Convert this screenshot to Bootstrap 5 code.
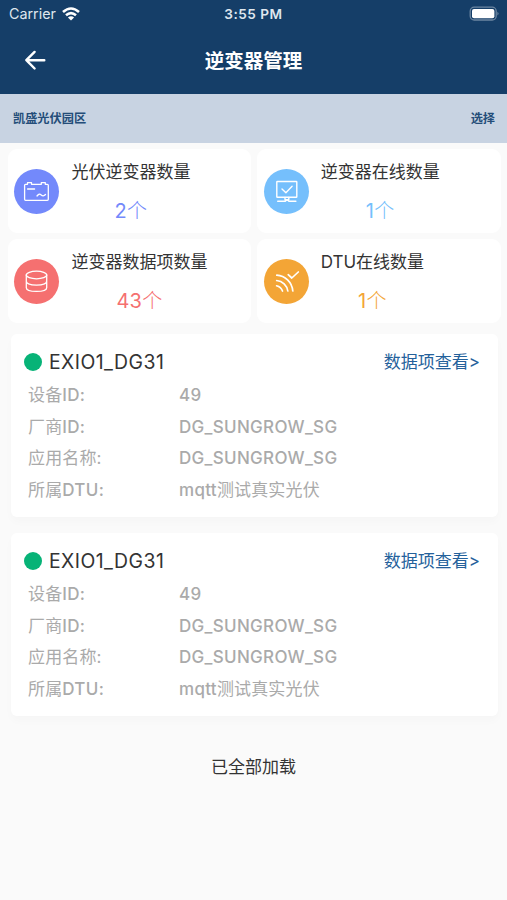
<!DOCTYPE html>
<html lang="zh-CN">
<head>
<meta charset="utf-8">
<meta name="viewport" content="width=device-width, initial-scale=1">
<title>逆变器管理</title>
<link href="https://cdn.jsdelivr.net/npm/bootstrap@5.3.0/dist/css/bootstrap.min.css" rel="stylesheet">
<style>
body{background:#fafafa;color:#333;font-family:Inter,"Noto Sans CJK SC",sans-serif;font-size:17px;line-height:24px;min-height:900px;overflow-x:hidden}
svg{display:block;fill:none;stroke-linecap:round;stroke-linejoin:round}
.app-head{background:#153e68;height:94px}
.status-line{height:28px;padding:0 7px 0 9px;font-size:14.3px;color:#dfe6ee}
.status-line .clock{font-size:13.6px;font-weight:600;letter-spacing:.5px}
.wifi{margin-left:6px}
.title-line{height:65px}
.title-line h1{font-size:19.5px;font-weight:700;line-height:28px}
.back{width:71px}
.site-strip{background:#c8d3e2;height:48.5px;padding:2px 12px 0 13px;font-size:12.2px;font-weight:700;color:#244d79}
.stats{padding:6.5px 6.5px 0 8px;gap:6px;display:grid;grid-template-columns:1fr 1fr}
.stat{border:0;border-radius:9px;height:84.2px;padding:0 0 0 6.4px;background:#fff}
.disc{width:45px;height:45px}
.stat-copy{margin-left:12px;padding-top:11px}
.stat-num{font-size:20px;line-height:28px;margin-top:12.5px;font-weight:400;letter-spacing:.2px}
.unit{font-weight:300}
.c-violet{background:#7389fb}.c-sky{background:#75bffc}.c-coral{background:#f57070}.c-amber{background:#f3a536}
.t-violet{color:#7389fb}.t-sky{color:#75bffc}.t-coral{color:#f57070}.t-amber{color:#f3a536}
.devices{padding:10.5px 9px 0 11px;gap:16px}
.device{border:0;border-radius:6px;height:183px;background:#fff;padding:15px 18px 0 13px;box-shadow:0 5px 9px rgba(0,0,0,.018)}
.live{width:18px;height:18px;background:#07b377}
.device-name{font-size:19.4px;line-height:26px;margin-left:7px;letter-spacing:.46px}
.device-link{color:#24619b;padding-top:1px}
.device dl{color:#aaa;margin:4px 0 0 4px}
.device dl>div{height:31.8px}
.device dt{font-weight:400;width:151px;letter-spacing:.15px}
.latin{font-weight:500;letter-spacing:.3px}
.mixed{letter-spacing:.15px}
.loaded{margin-top:39px}
</style>
</head>
<body>
<header class="app-head">
  <div class="status-line d-flex align-items-center justify-content-between position-relative">
    <div class="d-flex align-items-center"><span>Carrier</span>
      <svg class="wifi" width="18" height="14" viewBox="0 0 18 14" stroke="#fff" stroke-width="2.6"><path d="M1 5Q9-2 17 5M4 8.3Q9 4 14 8.3" stroke-linecap="butt"/><path d="M9 13.5L5.9 10.5Q9 8.1 12.1 10.5Z" fill="#fff" stroke="none"/></svg>
    </div>
    <span class="clock position-absolute top-50 start-50 translate-middle text-nowrap">3:55 PM</span>
    <svg width="31" height="16" viewBox="0 0 31 16"><rect x="1.2" y="1.2" width="26" height="12.8" rx="4" stroke="#6c86a1" stroke-width="1.3"/><rect x="3" y="3" width="22.4" height="9.2" rx="2" fill="#fff"/><path d="M28.5 5.8q2 1.8 0 3.6z" fill="#8197ad"/></svg>
  </div>
  <div class="title-line d-flex align-items-center">
    <div class="back ps-4"><svg width="23" height="23" viewBox="0 0 23 23" stroke="#fff" stroke-width="2.4"><path d="M20.3 11.2H2.5M10.6 2.9L2.3 11.2l8.3 8.3"/></svg></div>
    <h1 class="flex-fill text-center text-white mb-0">逆变器管理</h1>
    <div class="back"></div>
  </div>
</header>
<div class="site-strip d-flex align-items-center justify-content-between"><span>凯盛光伏园区</span><span>选择</span></div>

<main>
  <section class="stats">
    <div class="stat d-flex">
      <div class="disc c-violet rounded-circle flex-shrink-0 align-self-center"><svg width="45" height="45" viewBox="0 0 45 45" stroke="#fff" stroke-width="1.3"><path d="M11.5 15.3h2v-1.6h4v1.6h9.8v-1.6h4v1.6h2q1 0 1 1v14q0 1-1 1H11.6q-1 0-1-1v-14q0-1 .9-1zM13.6 20h7M23 27q2.2-3 4.2-1t4.3-.5"/></svg></div>
      <div class="stat-copy d-flex flex-column align-items-center"><div>光伏逆变器数量</div><div class="stat-num t-violet">2<span class="unit">个</span></div></div>
    </div>
    <div class="stat d-flex">
      <div class="disc c-sky rounded-circle flex-shrink-0 align-self-center"><svg width="45" height="45" viewBox="0 0 45 45" stroke="#fff" stroke-width="1.4"><rect x="12.8" y="12.5" width="20" height="15.8" rx=".6"/><path d="M18 20l3.9 3.8 6.2-6.5M21 28.5v2.2h3.8v-2.2M13.7 32.2h7.6l1-1h1.6l1 1h7"/></svg></div>
      <div class="stat-copy d-flex flex-column align-items-center"><div>逆变器在线数量</div><div class="stat-num t-sky">1<span class="unit">个</span></div></div>
    </div>
    <div class="stat d-flex">
      <div class="disc c-coral rounded-circle flex-shrink-0 align-self-center"><svg width="45" height="45" viewBox="0 0 45 45" stroke="#fff" stroke-width="1.3"><ellipse cx="22.5" cy="16" rx="10.2" ry="3.8"/><path d="M12.3 16v12.7c0 5 20.4 5 20.4 0V16M12.3 22.3c0 5 20.4 5 20.4 0"/></svg></div>
      <div class="stat-copy d-flex flex-column align-items-center"><div>逆变器数据项数量</div><div class="stat-num t-coral">43<span class="unit">个</span></div></div>
    </div>
    <div class="stat d-flex">
      <div class="disc c-amber rounded-circle flex-shrink-0 align-self-center"><svg width="45" height="45" viewBox="0 0 45 45" stroke="#fff" stroke-width="1.7"><path d="M12.8 16.2C21 16.7 28 23 28.8 32M12.7 21.5C18.5 22 23 26.5 23.8 32M12.6 26.8Q17 28 18.5 32M24.2 15.7l3.6 3.3 6.5-6"/></svg></div>
      <div class="stat-copy d-flex flex-column align-items-center"><div>DTU在线数量</div><div class="stat-num t-amber">1<span class="unit">个</span></div></div>
    </div>
  </section>

  <section class="devices d-flex flex-column">
    <article class="device">
      <div class="d-flex align-items-center"><span class="live rounded-circle"></span><span class="device-name">EXIO1_DG31</span><a class="device-link ms-auto text-decoration-none" href="#">数据项查看&gt;</a></div>
      <dl>
        <div class="d-flex align-items-center"><dt>设备<span class="latin">ID:</span></dt><dd class="mb-0 latin">49</dd></div>
        <div class="d-flex align-items-center"><dt>厂商<span class="latin">ID:</span></dt><dd class="mb-0 latin">DG_SUNGROW_SG</dd></div>
        <div class="d-flex align-items-center"><dt>应用名称:</dt><dd class="mb-0 latin">DG_SUNGROW_SG</dd></div>
        <div class="d-flex align-items-center"><dt>所属<span class="latin">DTU:</span></dt><dd class="mb-0 mixed"><span class="latin">mqtt</span>测试真实光伏</dd></div>
      </dl>
    </article>
    <article class="device">
      <div class="d-flex align-items-center"><span class="live rounded-circle"></span><span class="device-name">EXIO1_DG31</span><a class="device-link ms-auto text-decoration-none" href="#">数据项查看&gt;</a></div>
      <dl>
        <div class="d-flex align-items-center"><dt>设备<span class="latin">ID:</span></dt><dd class="mb-0 latin">49</dd></div>
        <div class="d-flex align-items-center"><dt>厂商<span class="latin">ID:</span></dt><dd class="mb-0 latin">DG_SUNGROW_SG</dd></div>
        <div class="d-flex align-items-center"><dt>应用名称:</dt><dd class="mb-0 latin">DG_SUNGROW_SG</dd></div>
        <div class="d-flex align-items-center"><dt>所属<span class="latin">DTU:</span></dt><dd class="mb-0 mixed"><span class="latin">mqtt</span>测试真实光伏</dd></div>
      </dl>
    </article>
  </section>
  <p class="loaded text-center mb-0">已全部加载</p>
</main>
<script src="https://cdn.jsdelivr.net/npm/bootstrap@5.3.0/dist/js/bootstrap.bundle.min.js"></script>
</body>
</html>
